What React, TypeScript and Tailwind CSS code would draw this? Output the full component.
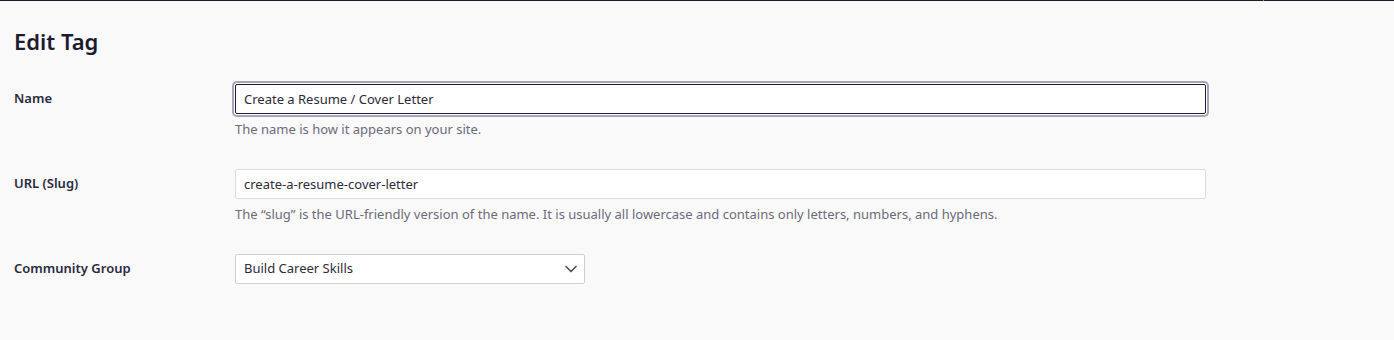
import { ChevronDown } from 'lucide-react';

const font = { fontFamily: '"Noto Sans", "Open Sans", sans-serif' };

function Row({ label, children }: { label: string; children: React.ReactNode }) {
  return (
    <div className="grid grid-cols-[221px_971px] items-start">
      <div className="h-[30px] flex items-center text-[13px] font-semibold text-[#2b2a3d]">{label}</div>
      <div>{children}</div>
    </div>
  );
}

export default function App() {
  return (
    <div className="min-h-[340px] bg-[#f9f9fa]" style={font}>
      <div className="flex h-px">
        <div className="w-[1263px] bg-[#1d1b30]" />
        <div className="w-px bg-[#8a8996]" />
        <div className="flex-1 bg-[#1d1b30]" />
      </div>

      <div className="px-[14px] pt-[25px]">
        <h1 className="text-[22px] leading-[30px] font-semibold text-[#1d1b2e]">Edit Tag</h1>

        <div className="mt-[28px] flex flex-col gap-[30px]">
          <Row label="Name">
            <input
              defaultValue="Create a Resume / Cover Letter"
              className="block w-full h-[30px] px-[8px] bg-white text-[13px] text-[#2c2b38] border border-[#1e1b3a] rounded-[2px] shadow-[0_0_0_1px_#ffffff,0_0_0_3px_#a6a5b0] outline-none"
            />
            <p className="mt-[5px] text-[13px] leading-[20px] text-[#6c6b78]">The name is how it appears on your site.</p>
          </Row>

          <Row label="URL (Slug)">
            <input
              defaultValue="create-a-resume-cover-letter"
              className="block w-full h-[30px] px-[8px] bg-white text-[13px] text-[#2c2b38] border border-[#dcdcde] rounded-[2px] outline-none"
            />
            <p className="mt-[5px] text-[13px] leading-[20px] text-[#6c6b78]">
              The “slug” is the URL-friendly version of the name. It is usually all lowercase and contains only letters, numbers, and hyphens.
            </p>
          </Row>

          <Row label="Community Group">
            <div className="w-[350px] h-[30px] flex items-center justify-between pl-[8px] pr-[3px] bg-white border border-[#cfcfd2] rounded-[2px] text-[13px] text-[#2c2b38]">
              <span>Build Career Skills</span>
              <ChevronDown className="w-[20px] h-[20px] text-[#50505a]" strokeWidth={2} />
            </div>
          </Row>
        </div>
      </div>
    </div>
  );
}
